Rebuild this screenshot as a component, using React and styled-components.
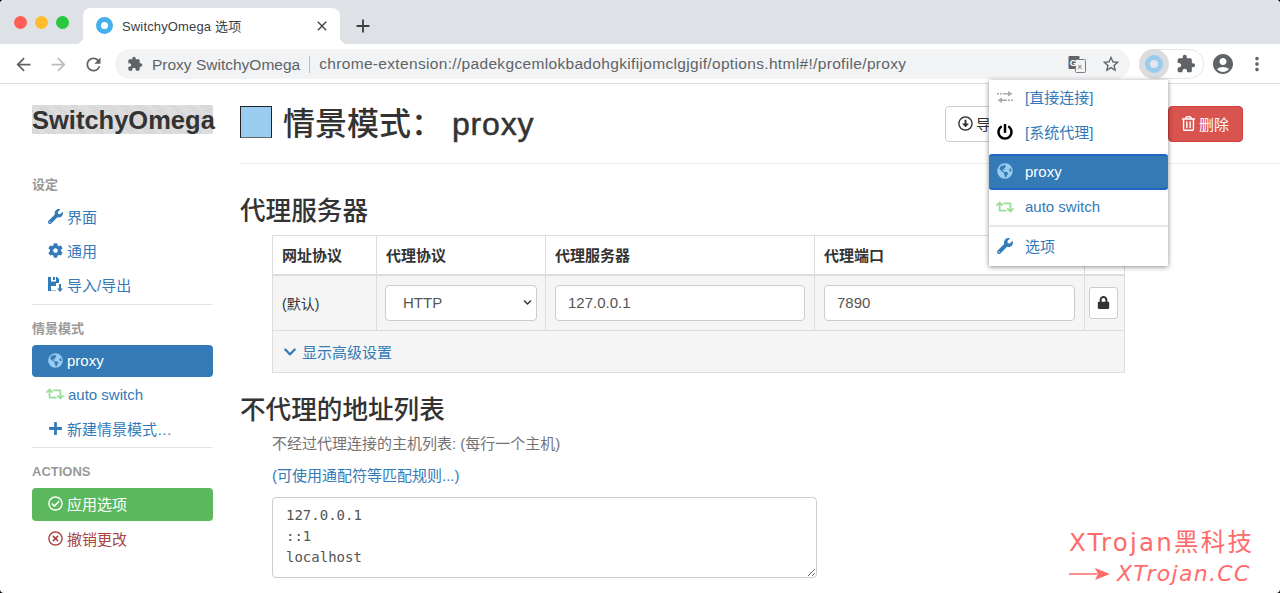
import styled, { createGlobalStyle } from 'styled-components';
import {
    FaWrench,
    FaCog,
    FaGlobeAmericas,
    FaRetweet,
    FaPlus,
    FaRegCheckCircle,
    FaRegTimesCircle,
    FaRegTrashAlt,
    FaRegArrowAltCircleDown,
    FaLock,
    FaChevronDown,
    FaPowerOff,
} from 'react-icons/fa';
import {
    MdArrowBack,
    MdArrowForward,
    MdRefresh,
    MdExtension,
    MdStarBorder,
    MdAccountCircle,
    MdMoreVert,
    MdClose,
    MdAdd,
} from 'react-icons/md';

const sans = `"Liberation Sans", "Noto Sans CJK SC", sans-serif`;
const linkBlue = '#337ab7';

const GlobalStyle = createGlobalStyle`
    html, body {
        margin: 0;
        height: 100%;
        background: #000;
    }
    body {
        font-family: ${sans};
        font-size: 15px;
        color: #333;
        overflow: hidden;
    }
    * {
        box-sizing: border-box;
    }
`;

const Window = styled.div`
    position: relative;
    width: 1280px;
    height: 593px;
    background: #fff;
    border-radius: 4px;
    overflow: hidden;
`;

/* browser chrome */

const TabStrip = styled.div`
    display: flex;
    align-items: flex-end;
    height: 44px;
    background: #dee1e6;
`;

const Lights = styled.div`
    display: flex;
    gap: 8px;
    align-self: flex-start;
    padding: 16px 14px 0 14px;
    width: 83px;
`;

const Light = styled.span`
    width: 13px;
    height: 13px;
    border-radius: 50%;
    background: ${(props) => props.color};
`;

const Tab = styled.div`
    position: relative;
    display: flex;
    align-items: center;
    width: 257px;
    height: 36px;
    padding: 0 10px 1px 13px;
    background: #fff;
    border-radius: 8px 8px 0 0;
    font-size: 13px;
    letter-spacing: 0.15px;
    color: #3c4043;
    &::before,
    &::after {
        content: '';
        position: absolute;
        bottom: 0;
        width: 8px;
        height: 8px;
    }
    &::before {
        left: -8px;
        background: radial-gradient(circle at 0 0, #dee1e6 8px, #fff 8.5px);
    }
    &::after {
        right: -8px;
        background: radial-gradient(circle at 100% 0, #dee1e6 8px, #fff 8.5px);
    }
`;

const Favicon = styled.span`
    width: 17px;
    height: 17px;
    margin-right: 9px;
    border-radius: 50%;
    border: 5px solid #45b0ee;
    background: #fff;
`;

const TabTitle = styled.span`
    flex: 1;
`;

const NewTab = styled.div`
    display: flex;
    align-items: center;
    justify-content: center;
    width: 26px;
    height: 36px;
    margin-left: 10px;
    color: #3c4043;
    font-size: 22px;
`;

const Toolbar = styled.div`
    display: flex;
    align-items: center;
    height: 40px;
    padding-top: 1px;
    background: #fff;
    border-bottom: 1px solid #dadce0;
`;

const NavButton = styled.div`
    flex: none;
    display: flex;
    align-items: center;
    justify-content: center;
    width: 34px;
    height: 30px;
    font-size: ${(props) => props.size || 20}px;
    color: ${(props) => (props.muted ? '#bbbdc0' : '#5f6368')};
`;

const BackButtons = styled.div`
    display: flex;
    gap: 1px;
    padding-left: 6px;
    margin-right: 5px;
`;

const Omnibox = styled.div`
    flex: none;
    display: flex;
    align-items: center;
    width: 1015px;
    height: 30px;
    padding: 0 2px 0 12px;
    background: #f1f3f4;
    border-radius: 15px;
    font-size: 15.5px;
    color: #5f6368;
    white-space: nowrap;
`;

const SiteName = styled.span`
    margin-left: 9px;
    padding-right: 9px;
    border-right: 1px solid #b9bcc0;
    line-height: 17px;
`;

const Url = styled.span`
    flex: 1;
    margin-left: 9px;
    letter-spacing: 0.33px;
`;

const ExtensionPill = styled.div`
    flex: none;
    display: flex;
    align-items: center;
    height: 30px;
    margin: 0 2px 0 9px;
    border: 1px solid #e3e5e8;
    border-left: 0;
    border-radius: 15px;
`;

const OmegaButton = styled.div`
    display: flex;
    align-items: center;
    justify-content: center;
    width: 30px;
    height: 30px;
    border-radius: 50%;
    background: #dadce0;
`;

const OmegaRing = styled.span`
    width: 18px;
    height: 18px;
    border-radius: 50%;
    border: 5px solid #99ccee;
    background: #e4e6ea;
`;

/* page */

const Page = styled.div`
    display: flex;
    height: 509px;
`;

const Sidebar = styled.nav`
    flex: none;
    width: 240px;
    padding: 21px 27px 0 32px;
`;

const Logo = styled.div`
    height: 29px;
    margin-bottom: 43px;
    background: repeating-linear-gradient(45deg, #d4d4d4 0 1px, #e2e2e2 1px 2px);
    font-size: 25.5px;
    font-weight: 700;
    line-height: 31px;
    white-space: nowrap;
`;

const NavHeader = styled.div`
    height: 16px;
    margin-bottom: 8px;
    font-size: 13px;
    font-weight: 700;
    line-height: 16px;
    color: #999;
`;

const NavItem = styled.a`
    display: flex;
    align-items: center;
    gap: 4px;
    height: 32px;
    margin-bottom: 2px;
    padding: 0 0 2px ${(props) => (props.tight ? '14px' : '16px')};
    border-radius: 4px;
    color: ${(props) => (props.danger ? '#a94442' : linkBlue)};
    ${(props) => props.active && `background: ${linkBlue}; color: #fff;`}
    ${(props) => props.success && 'height: 33px; background: #5cb85c; color: #fff;'}
`;

const NavIcon = styled.span`
    display: inline-flex;
    color: ${(props) => props.color || 'inherit'};
    font-size: ${(props) => props.size || 15}px;
`;

const NavDivider = styled.div`
    height: 1px;
    margin: ${(props) => props.top}px 0 16px;
    background: #e5e5e5;
`;

const Main = styled.main`
    flex: 1;
    min-width: 0;
`;

const PageHeader = styled.header`
    display: flex;
    align-items: flex-start;
    height: 80px;
    padding: 22px 37px 0 0;
    border-bottom: 1px solid #eee;
`;

const ColorSwatch = styled.span`
    flex: none;
    width: 32px;
    height: 32px;
    background: #99ccee;
    border: 1px solid #222;
    border-bottom-color: #666;
`;

const Title = styled.h1`
    flex: 1;
    margin: 0 0 0 11px;
    font-size: 32px;
    font-weight: 500;
    line-height: 36px;
    white-space: nowrap;
`;

const ProfileName = styled.span`
    margin-left: 9px;
    letter-spacing: 0.8px;
    -webkit-text-stroke: 0.5px #333;
`;

const HeaderActions = styled.div`
    display: flex;
    gap: 4px;
`;

const Button = styled.button`
    display: flex;
    align-items: center;
    gap: 3px;
    width: ${(props) => props.width}px;
    height: 36px;
    padding: 0 12px 2px;
    font-family: ${sans};
    font-size: 15px;
    border-radius: 4px;
    border: 1px solid ${(props) => (props.danger ? '#d43f3a' : '#ccc')};
    background: ${(props) => (props.danger ? '#d9534f' : '#fff')};
    color: ${(props) => (props.danger ? '#fff' : '#333')};
`;

const Section = styled.h3`
    margin: ${(props) => props.top}px 0 ${(props) => props.bottom}px;
    font-size: 25.6px;
    font-weight: 500;
    line-height: 28px;
`;

const Indented = styled.div`
    margin-left: 32px;
`;

const ProxyTable = styled.table`
    width: 852px;
    table-layout: fixed;
    border-collapse: collapse;
    border: 1px solid #ddd;
    th,
    td {
        border: 1px solid #ddd;
        padding: 0 9px;
        text-align: left;
    }
    th {
        height: 39px;
        padding-bottom: 1px;
        border-bottom-width: 2px;
        font-size: 15px;
    }
    td {
        height: 56px;
        background: #f5f5f5;
    }
`;

const FooterCell = styled.td`
    && {
        height: 42px;
        padding-left: 10px;
    }
`;

const ShowMore = styled.a`
    display: flex;
    align-items: center;
    gap: 5px;
    color: ${linkBlue};
`;

const DefaultScheme = styled.span`
    font-size: 14px;
`;

const FieldWrap = styled.div`
    display: flex;
    align-items: center;
    height: 36px;
    margin: 0 ${(props) => (props.select ? '-1px' : '0')};
    padding: 0 12px;
    background: #fff;
    border: 1px solid #ccc;
    border-radius: 4px;
    color: #555;
`;

const SelectValue = styled.span`
    flex: 1;
    padding-left: 5px;
`;

const SelectArrow = styled(FaChevronDown)`
    margin-right: -8px;
    color: #333;
`;

const LockButton = styled.div`
    display: flex;
    align-items: center;
    justify-content: center;
    width: 29px;
    height: 32px;
    margin-left: -5px;
    background: #fff;
    border: 1px solid #ccc;
    border-radius: 3px;
    color: #333;
    font-size: 13px;
`;

const Help = styled.p`
    margin: 0 0 12px;
    line-height: 20px;
    color: #737373;
`;

const HelpLink = styled.a`
    display: block;
    margin-bottom: 11px;
    line-height: 20px;
    color: ${linkBlue};
`;

const BypassList = styled.textarea`
    display: block;
    width: 545px;
    height: 81px;
    padding: 7px 13px;
    border: 1px solid #ccc;
    border-radius: 4px;
    font-family: "DejaVu Sans Mono", monospace;
    font-size: 14px;
    line-height: 21px;
    color: #555;
    background: #fff;
    outline: none;
`;

/* extension popup */

const Popup = styled.ul`
    position: absolute;
    left: 989px;
    top: 80px;
    width: 179px;
    height: 186px;
    margin: 0;
    padding: 0;
    list-style: none;
    background: #fff;
    box-shadow: 0 1px 5px rgba(0, 0, 0, 0.45);
`;

const PopupItem = styled.li`
    display: flex;
    align-items: center;
    height: 35px;
    margin-top: ${(props) => props.top || 0}px;
    padding-bottom: 2px;
    color: ${linkBlue};
    ${(props) =>
        props.active &&
        `height: 36px;
         background: ${linkBlue};
         color: #fff;
         border-top: 2px solid #1f66bd;
         border-bottom: 2px solid #1f66bd;
         border-radius: 3px;`}
`;

const PopupIcon = styled.span`
    display: flex;
    align-items: center;
    justify-content: center;
    width: 36px;
    padding-right: 4px;
    color: ${(props) => props.color || 'inherit'};
    font-size: ${(props) => props.size || 16}px;
`;

const PopupDivider = styled.li`
    height: 2px;
    margin-bottom: 2px;
    background: #e8e8e8;
`;

/* watermark over the page */

const Watermark = styled.div`
    position: absolute;
    left: 1069px;
    top: 526px;
    color: #ff6b6b;
    font-family: "DejaVu Sans", "Noto Sans CJK SC", sans-serif;
    white-space: nowrap;
`;

const WatermarkTitle = styled.div`
    font-size: 24.5px;
    line-height: 33px;
    letter-spacing: 2.2px;
`;

const WatermarkLink = styled.div`
    display: flex;
    align-items: center;
    gap: 7px;
    font-size: 22px;
    line-height: 29px;
    font-style: italic;
    letter-spacing: 1.3px;
`;

const TransferIcon = () => (
    <svg width="16" height="12" viewBox="0 0 16 12" fill="#aaa">
        <path d="M0 2h2v1.4H0zM3 2h2v1.4H3zM6 2h5V0l4.5 2.7L11 5.4V3.4H6zM16 8.6h-2V10h2zM13 8.6h-2V10h2zM10 8.6H5V6.6L.5 9.3 5 12v-2h5z" />
    </svg>
);

const SaveFileIcon = () => (
    <svg width="15" height="15" viewBox="0 0 15 15" fill="currentColor">
        <path d="M0 0h3v4.5h5V0h1l2 2v4H8v3H3v4.5h5V14H0z" />
        <path d="M5 0h2v3H5zM11 7h2v4.5h2L12 15l-3-3.5h2z" />
    </svg>
);

const TranslateIcon = () => (
    <svg width="18" height="18" viewBox="0 0 18 18">
        <rect x="0.5" y="1" width="11" height="13" rx="1" fill="#5f6368" />
        <rect x="7.5" y="4.5" width="10" height="13" rx="1" fill="#f1f3f4" stroke="#7a7d81" />
        <text x="1.8" y="11" fontSize="9" fontWeight="700" fill="#fff" fontFamily="Liberation Sans">G</text>
        <text x="9.8" y="14" fontSize="8" fill="#5f6368" fontFamily="Liberation Sans">x</text>
    </svg>
);

const ArrowLine = () => (
    <svg width="41" height="14" viewBox="0 0 41 14" fill="#ff6b6b">
        <path d="M0 6.2h28V7.8H0zM26 1l15 6-15 6 3-6z" />
    </svg>
);

const App = () => (
    <Window>
        <GlobalStyle />
        <TabStrip>
            <Lights>
                <Light color="#ff5f57" />
                <Light color="#febc2e" />
                <Light color="#28c840" />
            </Lights>
            <Tab>
                <Favicon />
                <TabTitle>SwitchyOmega 选项</TabTitle>
                <MdClose size={16} />
            </Tab>
            <NewTab>
                <MdAdd />
            </NewTab>
        </TabStrip>

        <Toolbar>
            <BackButtons>
                <NavButton size={21}>
                    <MdArrowBack />
                </NavButton>
                <NavButton size={21} muted>
                    <MdArrowForward />
                </NavButton>
                <NavButton size={21}>
                    <MdRefresh />
                </NavButton>
            </BackButtons>
            <Omnibox>
                <MdExtension size={16} />
                <SiteName>Proxy SwitchyOmega</SiteName>
                <Url>chrome-extension://padekgcemlokbadohgkifijomclgjgif/options.html#!/profile/proxy</Url>
                <NavButton>
                    <TranslateIcon />
                </NavButton>
                <NavButton>
                    <MdStarBorder />
                </NavButton>
            </Omnibox>
            <ExtensionPill>
                <OmegaButton>
                    <OmegaRing />
                </OmegaButton>
                <NavButton>
                    <MdExtension />
                </NavButton>
            </ExtensionPill>
            <NavButton size={24}>
                <MdAccountCircle />
            </NavButton>
            <NavButton size={22}>
                <MdMoreVert />
            </NavButton>
        </Toolbar>

        <Page>
            <Sidebar>
                <Logo>SwitchyOmega</Logo>
                <NavHeader>设定</NavHeader>
                <NavItem>
                    <NavIcon><FaWrench /></NavIcon>界面
                </NavItem>
                <NavItem>
                    <NavIcon><FaCog /></NavIcon>通用
                </NavItem>
                <NavItem>
                    <NavIcon><SaveFileIcon /></NavIcon>导入/导出
                </NavItem>
                <NavDivider top={3} />
                <NavHeader>情景模式</NavHeader>
                <NavItem active>
                    <NavIcon color="#99ccee"><FaGlobeAmericas /></NavIcon>proxy
                </NavItem>
                <NavItem tight>
                    <NavIcon color="#99dd99" size={18}><FaRetweet /></NavIcon>auto switch
                </NavItem>
                <NavItem>
                    <NavIcon><FaPlus /></NavIcon>新建情景模式…
                </NavItem>
                <NavDivider top={0} />
                <NavHeader>ACTIONS</NavHeader>
                <NavItem success>
                    <NavIcon><FaRegCheckCircle /></NavIcon>应用选项
                </NavItem>
                <NavItem danger>
                    <NavIcon><FaRegTimesCircle /></NavIcon>撤销更改
                </NavItem>
            </Sidebar>

            <Main>
                <PageHeader>
                    <ColorSwatch />
                    <Title>
                        情景模式：<ProfileName>proxy</ProfileName>
                    </Title>
                    <HeaderActions>
                        <Button width={219}>
                            <FaRegArrowAltCircleDown size={15} />导出PAC
                        </Button>
                        <Button width={75} danger>
                            <FaRegTrashAlt size={15} />删除
                        </Button>
                    </HeaderActions>
                </PageHeader>

                <Section top={33} bottom={10}>代理服务器</Section>
                <Indented>
                    <ProxyTable>
                        <colgroup>
                            <col width="104" />
                            <col width="169" />
                            <col width="269" />
                            <col width="270" />
                            <col width="40" />
                        </colgroup>
                        <thead>
                            <tr>
                                <th>网址协议</th>
                                <th>代理协议</th>
                                <th>代理服务器</th>
                                <th>代理端口</th>
                                <th />
                            </tr>
                        </thead>
                        <tbody>
                            <tr>
                                <td><DefaultScheme>(默认)</DefaultScheme></td>
                                <td>
                                    <FieldWrap select>
                                        <SelectValue>HTTP</SelectValue>
                                        <SelectArrow size={9} />
                                    </FieldWrap>
                                </td>
                                <td><FieldWrap>127.0.0.1</FieldWrap></td>
                                <td><FieldWrap>7890</FieldWrap></td>
                                <td>
                                    <LockButton><FaLock /></LockButton>
                                </td>
                            </tr>
                            <tr>
                                <FooterCell colSpan={5}>
                                    <ShowMore>
                                        <FaChevronDown size={14} />显示高级设置
                                    </ShowMore>
                                </FooterCell>
                            </tr>
                        </tbody>
                    </ProxyTable>
                </Indented>

                <Section top={23} bottom={10}>不代理的地址列表</Section>
                <Indented>
                    <Help>不经过代理连接的主机列表: (每行一个主机)</Help>
                    <HelpLink>(可使用通配符等匹配规则...)</HelpLink>
                    <BypassList readOnly defaultValue={'127.0.0.1\n::1\nlocalhost'} />
                </Indented>
            </Main>
        </Page>

        <Popup>
            <PopupItem>
                <PopupIcon><TransferIcon /></PopupIcon>[直接连接]
            </PopupItem>
            <PopupItem>
                <PopupIcon color="#000"><FaPowerOff /></PopupIcon>[系统代理]
            </PopupItem>
            <PopupItem active top={4}>
                <PopupIcon color="#99ccee"><FaGlobeAmericas /></PopupIcon>proxy
            </PopupItem>
            <PopupItem>
                <PopupIcon color="#99dd99" size={18}><FaRetweet /></PopupIcon>auto switch
            </PopupItem>
            <PopupDivider />
            <PopupItem>
                <PopupIcon><FaWrench /></PopupIcon>选项
            </PopupItem>
        </Popup>

        <Watermark>
            <WatermarkTitle>XTrojan黑科技</WatermarkTitle>
            <WatermarkLink>
                <ArrowLine />XTrojan.CC
            </WatermarkLink>
        </Watermark>
    </Window>
);

export default App;
